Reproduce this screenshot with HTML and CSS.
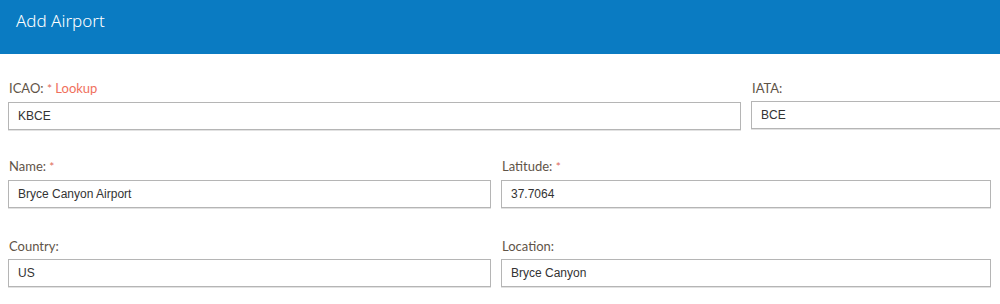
FILE: index.html
```html
<!DOCTYPE html>
<html lang="en">
	<head>
		<meta charset="utf-8" />
		<title>Add Airport</title>
		<link rel="stylesheet" href="styles.css">
	</head>
	<body>
		<div class="header">
			<h1 class="title">Add Airport</h1>
		</div>
		<form class="form">
			<div class="row rowWide">
				<div class="field">
					<label class="label">ICAO: <span class="req">*</span> <a class="lookup" href="#">Lookup</a></label>
					<input class="input" type="text" value="KBCE">
				</div>
				<div class="field">
					<label class="label">IATA:</label>
					<input class="input" type="text" value="BCE">
				</div>
			</div>
			<div class="row">
				<div class="field">
					<label class="label">Name: <span class="req">*</span></label>
					<input class="input" type="text" value="Bryce Canyon Airport">
				</div>
				<div class="field">
					<label class="label">Latitude: <span class="req">*</span></label>
					<input class="input" type="text" value="37.7064">
				</div>
			</div>
			<div class="row">
				<div class="field">
					<label class="label">Country:</label>
					<input class="input" type="text" value="US">
				</div>
				<div class="field">
					<label class="label">Location:</label>
					<input class="input" type="text" value="Bryce Canyon">
				</div>
			</div>
		</form>
	</body>
</html>
```

FILE: styles.css
```css
body {
	margin: 0;
	overflow: hidden;
	background-color: #FFFFFF;
	font-family: "Lato", "Liberation Sans", sans-serif;
}
.header {
	height: 54px;
	box-sizing: border-box;
	padding: 10px 16px 0;
	background-color: #0A7BC2;
}
.title {
	margin: 0;
	font-family: "Noto Sans", "Liberation Sans", sans-serif;
	font-size: 17px;
	font-weight: 300;
	line-height: 22px;
	color: #FFFFFF;
}
.form {
	width: 983px;
	margin: 0 0 0 8px;
	padding-top: 25px;
}
.row {
	display: grid;
	grid-template-columns: 483px 490px;
	column-gap: 10px;
	margin-bottom: 29px;
}
.rowWide {
	grid-template-columns: 733px 260px;
	margin-bottom: 27px;
}
.field {
	display: flex;
	flex-direction: column;
}
.label {
	display: block;
	margin-bottom: 4px;
	padding-left: 1px;
	font-size: 13px;
	line-height: 18px;
	color: #5F5448;
}
.req {
	color: #E06A5A;
	font-size: 12px;
}
.lookup {
	color: #F0705C;
	text-decoration: none;
}
.input {
	height: 28px;
	box-sizing: border-box;
	margin: 0;
	padding: 0 9px;
	border: 1px solid #B5B5B5;
	border-radius: 0;
	box-shadow: 0 1px 0 #E2E2E2;
	font-family: "Liberation Sans", Arial, sans-serif;
	font-size: 12px;
	color: #333333;
	background-color: #FFFFFF;
	outline: none;
}
```
